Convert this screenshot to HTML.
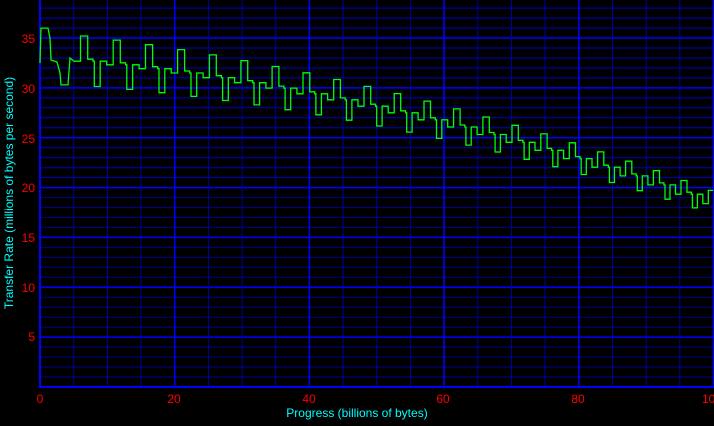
<!DOCTYPE html>
<html><head><meta charset="utf-8"><style>
body{margin:0;background:#000;width:714px;height:421px;overflow:hidden;font-family:"Liberation Sans",sans-serif}
svg text{font-family:"Liberation Sans",sans-serif;font-size:12px}
</style></head><body>
<svg id="s" width="714" height="421" xmlns="http://www.w3.org/2000/svg">
<rect width="714" height="421" fill="#000"/>
<g id="grid"></g>
<polyline id="pl" fill="none" stroke="#00ff00" stroke-width="1.3" points=""/>
<g fill="#ff0000" text-anchor="end">
<text x="35" y="43">35</text><text x="35" y="93">30</text><text x="35" y="143">25</text>
<text x="35" y="192">20</text><text x="35" y="242">15</text><text x="35" y="292">10</text>
<text x="35" y="341">5</text>
</g>
<g fill="#ff0000" text-anchor="middle">
<text x="40" y="403">0</text><text x="174" y="403">20</text><text x="309" y="403">40</text>
<text x="443" y="403">60</text><text x="578" y="403">80</text><text x="712" y="403">100</text>
</g>
<text x="357" y="417" fill="#00ffff" text-anchor="middle">Progress (billions of bytes)</text>
<text transform="translate(13,193) rotate(-90)" fill="#00ffff" text-anchor="middle">Transfer Rate (millions of bytes per second)</text>
</svg>
<script>
var g=document.getElementById('grid'),h='';
for(var k=0;k<=39;k++){var y=387-9.97*k;var maj=k%5==0;var c=maj?'#0000ff':(y<190?'#0000c8':'#00008c');
h+='<line x1="40" x2="714" y1="'+y.toFixed(1)+'" y2="'+y.toFixed(1)+'" stroke="'+c+'" stroke-width="'+(maj?1.5:1)+'"/>';}
for(var k=0;k<=20;k++){var x=40+6.735*5*k;var maj=k%4==0;
h+='<line y1="0" y2="387" x1="'+x.toFixed(1)+'" x2="'+x.toFixed(1)+'" stroke="'+(maj?'#0000ff':'#0000a0')+'" stroke-width="'+(maj?1.5:1)+'"/>';}
h+='<line x1="40" x2="40" y1="0" y2="388" stroke="#0000ff" stroke-width="2"/><line x1="40" x2="714" y1="387" y2="387" stroke="#0000ff" stroke-width="2"/>';
g.innerHTML=h;
function Y(v){return 387-9.97*v;}
var pts=[[40,Y(32.5)],[41,Y(36)],[48,Y(36)],[50,Y(35)],[51,Y(32.8)],[57,Y(32.6)],[60,Y(31.5)],[61,Y(30.3)],[68,Y(30.3)],[70,Y(33)]];
var x=74;
while(x<716){var t=(x-40)/674;var P=33-6*t;var C=33-6*t-9*t*t;var A=2.6-1.3*t;
var ph=[[0,C],[0.12,C],[0.2,C+A],[0.38,C+A],[0.42,C+0.2],[0.58,C],[0.62,C-A],[0.76,C-A],[0.8,C],[1,C]];
for(var i=0;i<ph.length;i++){var xx=x+ph[i][0]*P;
if(i>0){var prev=pts[pts.length-1];pts.push([xx,prev[1]]);}
pts.push([xx,Y(ph[i][1])]);}
x+=P;}
var s=pts.filter(function(p){return p[0]<=714}).map(function(p){return p[0].toFixed(1)+','+p[1].toFixed(1)}).join(' ');
document.getElementById('pl').setAttribute('points',s);
</script>
</body></html>
